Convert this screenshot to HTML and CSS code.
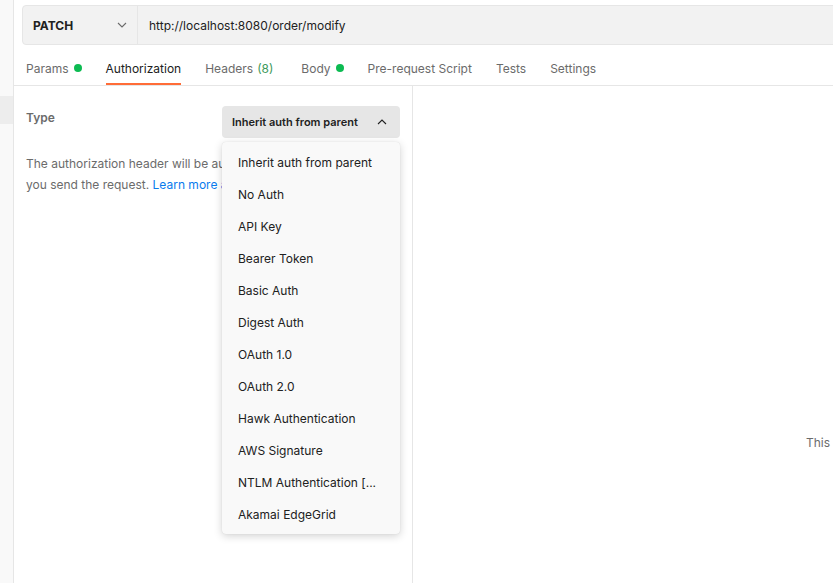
FILE: index.html
```html
<!DOCTYPE html>
<html lang="en">
<head>
<meta charset="utf-8">
<title>Authorization</title>
<link rel="stylesheet" href="styles.css">
</head>
<body>
<div class="app">
  <aside class="sidebar"><div class="sidebar-sel"></div></aside>
  <main class="main">
    <div class="urlbar-wrap">
      <div class="urlbar">
        <div class="method">
          <span class="method-name">PATCH</span>
          <svg class="chev-down" width="10" height="6" viewBox="0 0 10 6"><path d="M1 1l4 4 4-4" fill="none" stroke="#6b6b6b" stroke-width="1.1"/></svg>
        </div>
        <div class="url">http://localhost:8080/order/modify</div>
      </div>
    </div>
    <nav class="tabs">
      <div class="tab">Params<span class="dot"></span></div>
      <div class="tab active">Authorization</div>
      <div class="tab tab-headers">Headers <span class="count">(8)</span></div>
      <div class="tab">Body<span class="dot"></span></div>
      <div class="tab">Pre-request Script</div>
      <div class="tab">Tests</div>
      <div class="tab">Settings</div>
    </nav>
    <div class="panes">
      <section class="left">
        <div class="type-row">
          <div class="type-label">Type</div>
          <div class="select">
            <div class="select-btn">
              <span>Inherit auth from parent</span>
              <svg class="chev-up" width="10" height="6" viewBox="0 0 10 6"><path d="M1 5l4-4 4 4" fill="none" stroke="#212121" stroke-width="1.1"/></svg>
            </div>
            <ul class="menu">
              <li>Inherit auth from parent</li>
              <li>No Auth</li>
              <li>API Key</li>
              <li>Bearer Token</li>
              <li>Basic Auth</li>
              <li>Digest Auth</li>
              <li>OAuth 1.0</li>
              <li>OAuth 2.0</li>
              <li>Hawk Authentication</li>
              <li>AWS Signature</li>
              <li>NTLM Authentication [...</li>
              <li>Akamai EdgeGrid</li>
            </ul>
          </div>
        </div>
        <p class="desc">The authorization header will be automatically generated when<br>you send the request. <a class="link" href="#">Learn more about authorization</a></p>
      </section>
      <section class="right">
        <p class="right-text">This request is not inheriting any authorization helper at the moment.</p>
      </section>
    </div>
  </main>
</div>
</body>
</html>
```

FILE: styles.css
```css
* { box-sizing: border-box; }
html, body { margin: 0; padding: 0; }
body {
  font-family: Inter, "Noto Sans", sans-serif;
  color: #212121;
  background: #fff;
  width: 833px;
  height: 583px;
  overflow: hidden;
}
.app {
  display: flex;
  height: 583px;
}
.sidebar {
  width: 14px;
  flex: none;
  background: #f9f9f9;
  border-right: 1px solid #e6e6e6;
  padding-top: 96px;
}
.sidebar-sel {
  height: 28px;
  background: #ededed;
}
.main {
  flex: 1;
  min-width: 0;
  display: flex;
  flex-direction: column;
  overflow: hidden;
}
.urlbar-wrap {
  padding: 5px 0 0 8px;
}
.urlbar {
  display: flex;
  height: 40px;
  margin-right: -20px;
  background: #f2f2f2;
  border: 1px solid #e6e6e6;
  border-radius: 4px;
}
.method {
  width: 115px;
  flex: none;
  display: flex;
  align-items: center;
  justify-content: space-between;
  padding: 0 10px 0 10px;
  border-right: 1px solid #e6e6e6;
}
.method-name {
  font-weight: 700;
  font-size: 12px;
  color: #212121;
}
.chev-down { display: block; }
.url {
  display: flex;
  align-items: center;
  padding-left: 11px;
  font-size: 12px;
  color: #212121;
}
.tabs {
  display: flex;
  gap: 24px;
  height: 41px;
  padding: 0 12px;
  border-bottom: 1px solid #e6e6e6;
}
.tab {
  display: flex;
  align-items: center;
  font-size: 12px;
  color: #6b6b6b;
  padding-top: 8px;
  border-bottom: 2px solid transparent;
}
.tab.active {
  color: #212121;
  border-bottom-color: #ff6c37;
}
.tab-headers { margin-right: 4px; }
.count { color: #3d9a5c; margin-left: 4px; }
.dot {
  width: 8px;
  height: 8px;
  border-radius: 50%;
  background: #0cbb52;
  margin-left: 5px;
}
.panes {
  flex: 1;
  display: flex;
}
.left {
  width: 399px;
  flex: none;
  border-right: 1px solid #e6e6e6;
  padding: 20px 12px 0 12px;
}
.type-row {
  display: flex;
  justify-content: space-between;
  align-items: flex-start;
}
.type-label {
  font-size: 12px;
  font-weight: 600;
  color: #6b6b6b;
  line-height: 24px;
}
.select {
  position: relative;
  width: 178px;
}
.select-btn {
  height: 32px;
  display: flex;
  align-items: center;
  justify-content: space-between;
  padding: 0 13px 0 10px;
  background: #e6e6e6;
  border-radius: 4px;
  font-size: 11px;
  font-weight: 600;
  color: #212121;
}
.menu {
  position: absolute;
  top: 36px;
  left: 0;
  right: 0;
  margin: 0;
  padding: 5px 0 3px 0;
  list-style: none;
  background: #f9f9f9;
  border-radius: 4px;
  box-shadow: 0 2px 8px rgba(0,0,0,0.18), 0 0 1px rgba(0,0,0,0.12);
  z-index: 5;
}
.menu li {
  height: 32px;
  line-height: 32px;
  padding-left: 16px;
  font-size: 12px;
  color: #212121;
  white-space: nowrap;
}
.desc {
  margin: 15px 0 0 0;
  font-size: 12px;
  line-height: 21px;
  color: #6b6b6b;
  white-space: nowrap;
}
.link { color: #097bed; text-decoration: none; }
.right {
  flex: 1;
  min-width: 0;
  overflow: hidden;
  padding: 349px 0 0 393px;
}
.right-text {
  margin: 0;
  font-size: 12px;
  color: #6b6b6b;
  white-space: nowrap;
}
```
